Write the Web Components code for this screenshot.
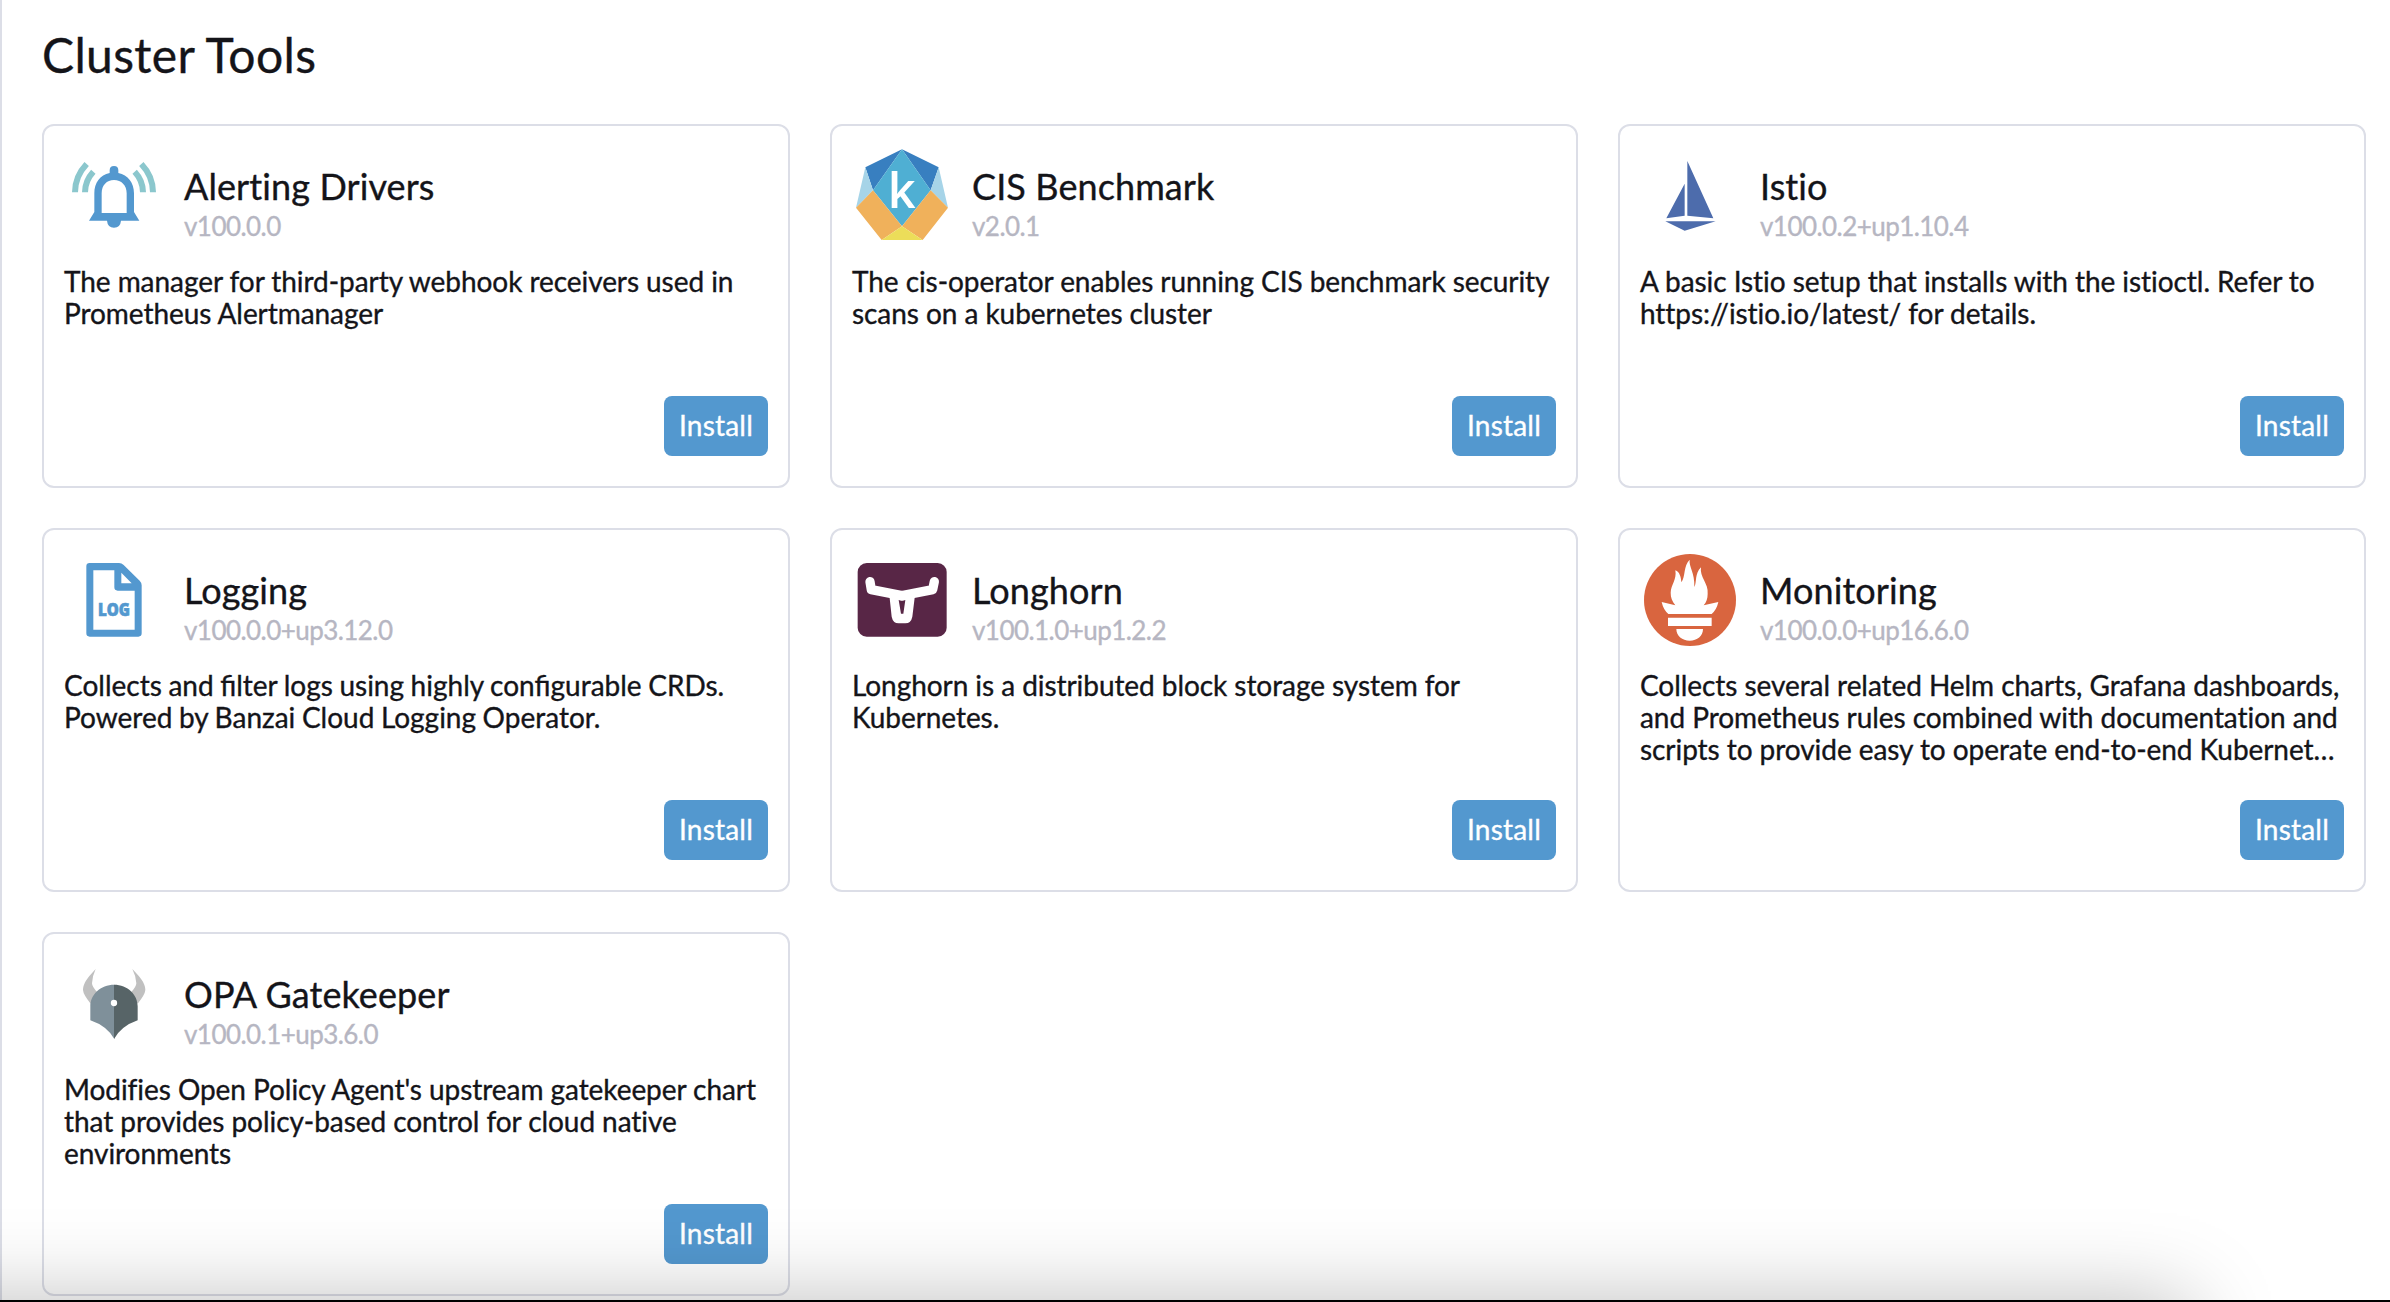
<!DOCTYPE html>
<html lang="en">
<head>
<meta charset="utf-8">
<title>Cluster Tools</title>
<style>
  html, body { margin: 0; height: 100%; overflow: hidden; background: #fff; }
  body {
    font-family: Lato, "Liberation Sans", sans-serif; color: #141419;
    font-variant-ligatures: none; -webkit-text-stroke: .35px currentColor;
  }
  .ligatures { font-variant-ligatures: common-ligatures; --text-spacing: 0; word-spacing: -.6px; }
  svg { -webkit-text-stroke: 0; }
</style>
</head>
<body>
<tools-page>
  <span slot="title">Cluster Tools</span>

  <tool-card name="Alerting Drivers" version="v100.0.0">
    <svg slot="icon" viewBox="42 18 300 300">
      <g fill="none" stroke="#8bc7cd" stroke-width="18">
        <path d="M75 157Q75 109 110 72M105 157Q105 122 130 95M309 157Q309 109 274 72M279 157Q279 122 254 95"/>
      </g>
      <path fill="#5398cf" fill-rule="evenodd" d="M179 99V91Q179 78 192 78Q205 78 205 91V99C234 105 252 128 252 160V216L268 242H213Q211 263 192 263Q173 263 171 242H117L133 216V160C133 128 150 105 179 99ZM155 219H230V160C230 136 214 120 192 120C170 120 155 136 155 160Z"/>
    </svg>
    The manager for third-party webhook receivers used in Prometheus Alertmanager
  </tool-card>

  <tool-card name="CIS Benchmark" version="v2.0.1">
    <svg slot="icon" viewBox="36 18 300 300">
      <path fill="#387fc0" d="M186 28L76 82L99 151L186 28L296 82L272 151Z"/>
      <path fill="#a6d4e8" d="M76 82L99 151L48 203ZM296 82L272 151L324 203Z"/>
      <path fill="#4fafd3" d="M186 28L272 151L186 259L99 151Z"/>
      <path fill="#f0b15b" d="M99 151L186 259L125 300L48 203ZM272 151L186 259L248 300L324 203Z"/>
      <path fill="#ecdd59" d="M186 259L248 300H125Z"/>
      <text x="143" y="204" font-family="Open Sans, sans-serif" font-weight="600" font-size="146" fill="#fff">k</text>
    </svg>
    The cis-operator enables running CIS benchmark security scans on a kubernetes cluster
  </tool-card>

  <tool-card name="Istio" version="v100.0.2+up1.10.4">
    <svg slot="icon" viewBox="30 18 300 300">
      <path fill="#4d6cac" d="M172 63L250 235L172 227ZM164 131V227L109 235ZM106 244H257L164 272Z"/>
    </svg>
    A basic Istio setup that installs with the istioctl. Refer to https://istio.io/latest/ for details.
  </tool-card>

  <tool-card class="ligatures" name="Logging" version="v100.0.0+up3.12.0">
    <svg slot="icon" viewBox="42 15 300 300">
      <path fill="#5398cf" fill-rule="evenodd" d="M119 54H207Q215 54 221 60L269 107Q275 113 275 121V265Q275 275 265 275H119Q109 275 109 265V64Q109 54 119 54ZM130 76V254H254V137H203Q193 137 193 127V76ZM214 83V115H245Z"/>
      <text x="144" y="213" font-family="Open Sans, sans-serif" font-weight="800" font-size="50" textLength="96" lengthAdjust="spacingAndGlyphs" fill="#5398cf" stroke="#5398cf" stroke-width="2">LOG</text>
    </svg>
    Collects and filter logs using highly configurable CRDs. Powered by Banzai Cloud Logging Operator.
  </tool-card>

  <tool-card name="Longhorn" version="v100.1.0+up1.2.2">
    <svg slot="icon" viewBox="36 15 300 300">
      <rect x="53" y="54" width="267" height="221" rx="27" fill="#582646"/>
      <path fill="none" stroke="#fff" stroke-width="28" stroke-linecap="round" stroke-linejoin="round" d="M90 110L94 134L186 152L278 134L283 110"/>
      <path fill="#fff" fill-rule="evenodd" d="M148 150L186 138L225 150L217 215Q213 235 196 235H176Q159 235 155 215ZM176 165L183 206H190L196 165Q186 169 176 165Z"/>
    </svg>
    Longhorn is a distributed block storage system for Kubernetes.
  </tool-card>

  <tool-card name="Monitoring" version="v100.0.0+up16.6.0">
    <svg slot="icon" viewBox="30 15 300 300">
      <circle cx="180" cy="165" r="138" fill="#d9653f"/>
      <path fill="#fff" d="M95 171L136 181C126 168 122 158 122 143C123 119 141 104 136 76C149 81 153 96 154 112C167 94 160 62 179 44C176 66 195 83 193 126C201 112 193 87 213 67C208 96 236 116 233 146C233 161 229 171 221 181L265 171Q260 194 245 207H115Q100 194 95 171ZM114 218H245V243H114ZM139 252H219C219 273 202 287 179 287C157 287 139 273 139 252Z"/>
    </svg>
    Collects several related Helm charts, Grafana dashboards, and Prometheus rules combined with documentation and scripts to provide easy to operate end-to-end Kubernet…
  </tool-card>

  <tool-card name="OPA Gatekeeper" version="v100.0.1+up3.6.0">
    <svg slot="icon" viewBox="42 12 300 300">
      <path fill="#c0c0c0" d="M137 57C105 91 99 105 99 120Q100 134 122 161L142 127Q126 110 126 100Q127 78 137 57ZM247 57C280 91 286 105 286 120Q285 134 263 161L243 127Q259 110 259 100Q258 78 247 57Z"/>
      <path fill="#7f909a" d="M193 104V267Q171 228 121 211V169C121 134 151 104 193 104Z"/>
      <path fill="#576467" d="M192 104V267Q214 228 263 211V169C263 134 233 104 192 104Z"/>
      <circle cx="192" cy="159" r="9.5" fill="#fff"/>
    </svg>
    Modifies Open Policy Agent's upstream gatekeeper chart that provides policy-based control for cloud native environments
  </tool-card>
</tools-page>

<script>
  class InstallButton extends HTMLElement {
    constructor() {
      super();
      this.attachShadow({ mode: 'open' }).innerHTML = `
        <style>
          :host { display: block; }
          button {
            display: block; width: 104px; height: 60px; padding: 0 0 2px;
            border: 0; border-radius: 8px; background: #5398cf; color: #fff;
            font: inherit; font-size: 28px; line-height: 58px; text-align: center;
            letter-spacing: .2px; -webkit-text-stroke: .35px #fff;
          }
        </style>
        <button type="button"><slot></slot></button>`;
    }
  }
  customElements.define('install-button', InstallButton);

  class ToolCard extends HTMLElement {
    constructor() {
      super();
      this.attachShadow({ mode: 'open' }).innerHTML = `
        <style>
          :host {
            display: flex; flex-direction: column; box-sizing: border-box;
            height: 364px; padding: 20px 20px 30px;
            border: 2px solid #dcdee7; border-radius: 12px;
          }
          header { display: flex; gap: 20px; height: 100px; }
          ::slotted(svg) { display: block; flex: none; width: 100px; height: 100px; }
          .labels { padding-top: 18px; white-space: nowrap; }
          h3 { margin: 0; font-size: 36px; line-height: 44px; font-weight: 400; letter-spacing: .1px; }
          .version {
            margin-top: 2px; font-size: 26px; line-height: 32px; letter-spacing: -.55px;
            color: #b6b6c2; -webkit-text-stroke: .35px #b6b6c2;
          }
          .description {
            flex: 1; margin-top: 19px; font-size: 28px; line-height: 32px;
            letter-spacing: var(--text-spacing, -.06px);
          }
          footer { display: flex; justify-content: flex-end; }
        </style>
        <header>
          <slot name="icon"></slot>
          <div class="labels"><h3></h3><div class="version"></div></div>
        </header>
        <div class="description"><slot></slot></div>
        <footer><install-button>Install</install-button></footer>`;
    }
    connectedCallback() {
      this.shadowRoot.querySelector('h3').textContent = this.getAttribute('name');
      this.shadowRoot.querySelector('.version').textContent = this.getAttribute('version');
    }
  }
  customElements.define('tool-card', ToolCard);

  class ToolsPage extends HTMLElement {
    constructor() {
      super();
      this.attachShadow({ mode: 'open' }).innerHTML = `
        <style>
          :host {
            display: block; position: relative; box-sizing: border-box; overflow: hidden;
            width: 2390px; height: 1302px; padding: 26px 24px 0 42px;
            background: linear-gradient(#dcdee7, #dcdee7) 0 0 / 2px 100% no-repeat;
          }
          h1 { margin: 0 0 40px; font-size: 48px; line-height: 58px; font-weight: 400; letter-spacing: .35px; }
          .grid { display: grid; grid-template-columns: repeat(3, 748px); gap: 40px; }
          .edge {
            position: absolute; left: -300px; top: 1300px; width: 2490px; height: 300px;
            box-shadow: 0 0 80px rgba(0, 0, 0, .26);
          }
          .line { position: absolute; left: 0; right: 0; top: 1300px; height: 2px; background: #000; }
        </style>
        <h1><slot name="title"></slot></h1>
        <div class="grid"><slot></slot></div>
        <div class="edge"></div><div class="line"></div>`;
    }
  }
  customElements.define('tools-page', ToolsPage);
</script>
</body>
</html>
